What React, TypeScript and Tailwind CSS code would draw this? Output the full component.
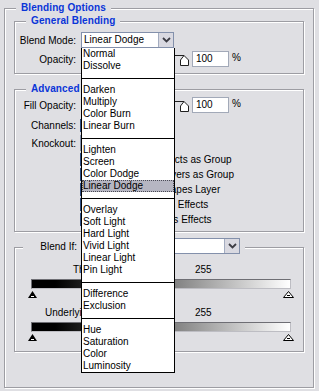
import React from 'react'

const modes: (string | null)[] = [
  'Normal', 'Dissolve', null,
  'Darken', 'Multiply', 'Color Burn', 'Linear Burn', null,
  'Lighten', 'Screen', 'Color Dodge', 'Linear Dodge', null,
  'Overlay', 'Soft Light', 'Hard Light', 'Vivid Light', 'Linear Light', 'Pin Light', null,
  'Difference', 'Exclusion', null,
  'Hue', 'Saturation', 'Color', 'Luminosity',
]

const etched = 'border border-[#9d9da3] shadow-[inset_1px_1px_0_#fff,1px_1px_0_#fff]'

function Chevron() {
  return (
    <svg width="9" height="6" viewBox="0 0 9 6">
      <path d="M1 1 L4.5 4.5 L8 1" fill="none" stroke="#3c3c44" strokeWidth="1.8" />
    </svg>
  )
}

function Select({ value, width }: { value: string; width: string }) {
  return (
    <div className={`flex h-[16px] border border-[#8390ab] bg-white ${width}`}>
      <span className="flex-1 pl-[2px] leading-[14px] whitespace-nowrap overflow-hidden">{value}</span>
      <span className="w-[15px] flex items-center justify-center bg-[#d9d9e1] border-l border-[#a3acc0]">
        <Chevron />
      </span>
    </div>
  )
}

function Label({ children }: { children: React.ReactNode }) {
  return <span className="w-[61px] shrink-0 text-right whitespace-nowrap">{children}</span>
}

function SliderIcon() {
  return (
    <svg width="15" height="16" viewBox="0 0 15 16" className="shrink-0">
      <path d="M0 4.5 H9 L13.5 9 V14.5 H5.5 V9 L9 4.5" fill="#fff" stroke="#202020" />
    </svg>
  )
}

function PercentRow({ label, value }: { label: string; value: string }) {
  return (
    <div className="flex items-center h-[16px]">
      <Label>{label}</Label>
      <span className="ml-[5px] w-[94px] shrink-0" />
      <SliderIcon />
      <span className="ml-[2px] w-[37px] h-[16px] border border-[#a2a9b8] bg-white pl-[3px] leading-[14px]">{value}</span>
      <span className="ml-[3px] -mt-[3px]">%</span>
    </div>
  )
}

function Box({ title, className, children }: { title?: string; className: string; children: React.ReactNode }) {
  return (
    <div className={`relative ${etched} ${className}`}>
      {title && (
        <span className="absolute left-[11px] -top-[7px] px-[5px] bg-[#dfdfe3] font-bold text-[#0a35d8] leading-[12px] tracking-[0.1px] whitespace-nowrap">
          {title}
        </span>
      )}
      {children}
    </div>
  )
}

function Check({ on }: { on?: boolean }) {
  return (
    <span className="w-[13px] h-[13px] shrink-0 border border-[#2d4b80] bg-white flex items-center justify-center">
      {on && (
        <svg width="9" height="9" viewBox="0 0 9 9">
          <path d="M1 4 L3.5 7 L8 1" fill="none" stroke="#000" strokeWidth="1.5" />
        </svg>
      )}
    </span>
  )
}

function Triangles() {
  return (
    <div className="mt-[2px] ml-[13px] w-[266px] h-[7px] flex justify-between">
      <svg width="9" height="7" viewBox="0 0 9 7">
        <path d="M4.5 0 L9 7 H0 Z" fill="#000" />
        <path d="M3 5.5 H6" stroke="#fff" />
      </svg>
      <svg width="11" height="7" viewBox="0 0 11 7">
        <path d="M5.5 0.5 L10.5 6.5 H0.5 Z" fill="#fff" stroke="#000" />
        <path d="M4 4.5 H7" stroke="#000" />
      </svg>
    </div>
  )
}

function Bar() {
  return (
    <div className="mt-[3px] ml-[16px] w-[260px] h-[10px] border-t border-l border-[#6e6e74] border-r border-b border-r-[#bdbdc3] border-b-[#bdbdc3] bg-[linear-gradient(to_right,#000_0%,#000_9%,#fff_100%)]" />
  )
}

export default function App() {
  return (
    <div className="relative w-[319px] h-[391px] bg-[#dfdfe3] pl-[4px] pt-[8px] font-['Liberation_Sans',sans-serif] text-[10px] text-black overflow-hidden">
      <Box title="Blending Options" className="w-[310px] h-[380px] pl-[9px] pt-[12px]">
        <Box title="General Blending" className="w-[290px] h-[53px] pt-[10px]">
          <div className="flex items-center h-[16px]">
            <Label>Blend Mode:</Label>
            <span className="ml-[5px]">
              <Select value="Linear Dodge" width="w-[93px]" />
            </span>
          </div>
          <div className="mt-[3px]">
            <PercentRow label="Opacity:" value="100" />
          </div>
        </Box>

        <Box title="Advanced Blending" className="mt-[15px] w-[290px] h-[143px] pt-[7px]">
          <PercentRow label="Fill Opacity:" value="100" />
          <div className="mt-[5px] flex items-center h-[14px]">
            <Label>Channels:</Label>
            <span className="ml-[4px] flex items-center gap-[4px]">
              <Check on /> <span>R</span>
              <Check on /> <span>G</span>
              <Check on /> <span>B</span>
            </span>
          </div>
          <div className="mt-[3px] flex items-center h-[16px]">
            <Label>Knockout:</Label>
            <span className="ml-[4px]">
              <Select value="None" width="w-[60px]" />
            </span>
          </div>
          <div className="mt-[1px] flex flex-col">
            {[
              ['Blend Interior Effects as Group', false],
              ['Blend Clipped Layers as Group', true],
              ['Transparency Shapes Layer', true],
              ['Layer Mask Hides Effects', false],
              ['Vector Mask Hides Effects', false],
            ].map(([t, on]) => (
              <div key={t as string} className="flex items-center h-[15px] pl-[65px]">
                <Check on={on as boolean} />
                <span className="ml-[2px] whitespace-nowrap">{t}</span>
              </div>
            ))}
          </div>
        </Box>

        <Box className="mt-[15px] w-[290px] h-[105px] pt-[16px]">
          <div className="absolute left-[8px] -top-[10px] flex items-center bg-[#dfdfe3] pr-[5px]">
            <span className="w-[54px] text-right">Blend If:</span>
            <span className="ml-[4px]">
              <Select value="Gray" width="w-[159px]" />
            </span>
          </div>
          <div className="flex h-[12px] leading-[12px]">
            <span className="ml-[58px] w-[64px] whitespace-nowrap">This Layer:</span>
            <span className="w-[58px]">0</span>
            <span>255</span>
          </div>
          <Bar />
          <Triangles />
          <div className="mt-[9px] flex h-[12px] leading-[12px]">
            <span className="ml-[30px] w-[92px] whitespace-nowrap">Underlying Layer:</span>
            <span className="w-[58px]">0</span>
            <span>255</span>
          </div>
          <Bar />
          <Triangles />
        </Box>
      </Box>

      <div className="absolute left-[81px] top-[48px] w-[94px] bg-white border-x border-b border-black">
        {modes.map((m, i) =>
          m === null ? (
            <div key={i} className="h-[12px] flex items-center">
              <div className="w-full h-px bg-black" />
            </div>
          ) : m === 'Linear Dodge' ? (
            <div key={i} className="h-[12px] leading-[10px] bg-[#b6b6c2] border border-dotted border-[#4a4a55] whitespace-nowrap">
              {m}
            </div>
          ) : (
            <div key={i} className="h-[12px] leading-[12px] pl-[1px] whitespace-nowrap">
              {m}
            </div>
          )
        )}
      </div>
    </div>
  )
}
